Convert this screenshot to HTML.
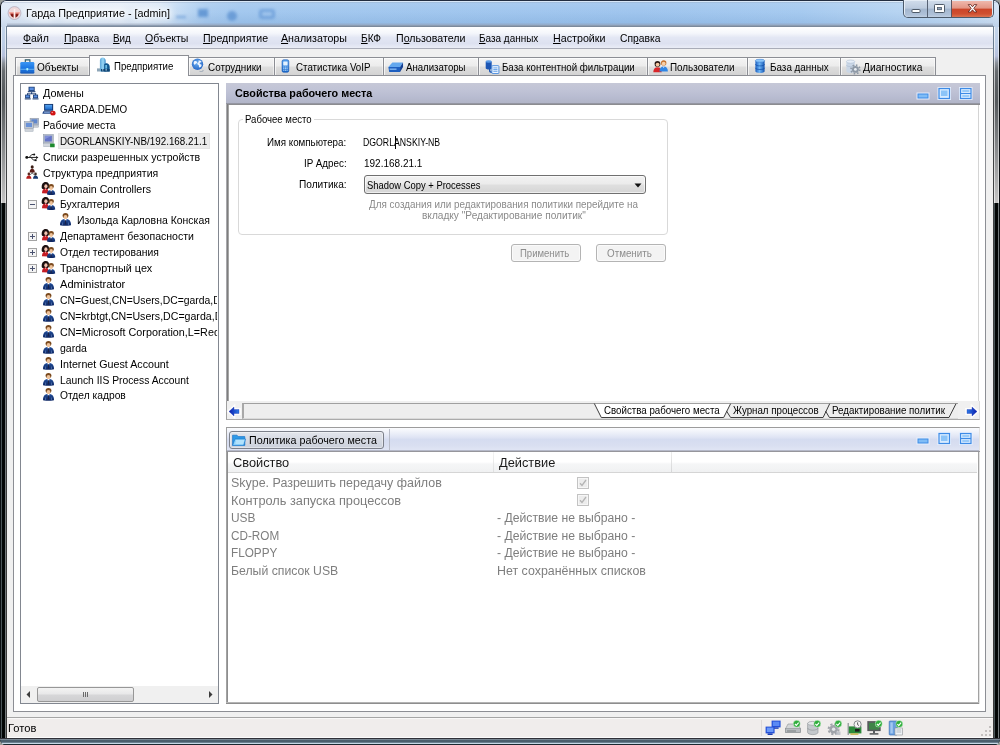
<!DOCTYPE html>
<html lang="ru">
<head>
<meta charset="utf-8">
<title>Гарда Предприятие - [admin]</title>
<style>
*{box-sizing:border-box;margin:0;padding:0}
html,body{width:1000px;height:745px;overflow:hidden;background:#9a9e9a}
body{font-family:"Liberation Sans","DejaVu Sans",sans-serif;font-size:12px;color:#000}
#win{position:absolute;left:0;top:0;width:1000px;height:745px;overflow:hidden;border-radius:6px 6px 6px 6px;background:#000}
#win>div,#win>svg,#win>span{position:absolute}
.t{white-space:pre;line-height:16px;height:16px;transform-origin:0 0}
.t u{text-decoration:underline;text-underline-offset:1px}
.ic{overflow:visible}
.titlebar{background:linear-gradient(90deg,#dfe9f6 0,#e6eef8 120px,#d9e7f6 160px,#bed8f3 182px,#a9cbef 205px,#a0c6ee 240px,#9cc3ed 640px,#a3c8ef 800px,#b4d2f1 900px,#c2daf3 960px,#d2e2f4 100%)}
.titleshade{background:linear-gradient(180deg,rgba(255,255,255,.14) 0,rgba(255,255,255,.03) 45%,rgba(40,90,150,.12) 100%)}
.side{background:linear-gradient(180deg,#c4d5ea 0,#bccde6 18px,#b6c0dc 29px,#8a9098 36px,#686c70 44px,#5a5e61 60px,#55595c 75px,#8c8e90 125px,#c4c4c4 175px,#c8c8c8 176px,#030606 176px,#030606 100%)}
.bottomframe{background:linear-gradient(180deg,#303038 0,#303038 1px,#7a8894 1px,#7a8894 2px,#4a5e6c 2px,#4a5e6c 4px,#6a8090 4px,#6a8090 5px,#c5d8e5 5px,#c5d8e5 6px,#1a2830 6px)}
.capbtns{border:1px solid #4c5a6b;border-top:none;border-radius:0 0 5px 5px;background:#e4ecf5}
.cbtn{background:linear-gradient(180deg,#cfdbea 0,#bccbde 45%,#a3b6ce 50%,#afc1d8 85%,#c0cfe2 100%)}
.cclose{background:linear-gradient(180deg,#efb8ac 0,#e39584 45%,#cb4529 50%,#cf4f30 80%,#dc7250 100%);border-radius:0 0 3px 0}
.menubar{background:linear-gradient(180deg,#ffffff 0,#f4f6fb 30%,#e3e7f4 50%,#dde1f0 78%,#e9ecf6 100%)}
.tab{border:1px solid #8c8e94;border-bottom:none;background:linear-gradient(180deg,#f4f4f4 0,#ececec 48%,#dedede 52%,#d3d3d3 100%);box-shadow:inset 1px 1px 0 rgba(255,255,255,.7),inset -1px 0 0 rgba(255,255,255,.5)}
.tab.act{background:#fff;box-shadow:none}
.phead{background:linear-gradient(180deg,#c6c8d7 0,#c0c3d6 35%,#b7bbd0 70%,#b1b4c6 100%)}
.phead2{background:linear-gradient(180deg,#fbfcfe 0,#eef1f9 20%,#dfe4f4 42%,#d5dcf0 52%,#d9dff1 80%,#e0e5f4 100%);border-bottom:1px solid #b4b8c8}
.pbtn{border:1px solid #7c808a;border-radius:3px;background:linear-gradient(180deg,#e2e5ec 0,#d6dae3 50%,#cbd0db 100%);box-shadow:inset 0 0 0 1px rgba(255,255,255,.4)}
.combo{border:1px solid #707070;border-radius:3px;background:linear-gradient(180deg,#f2f2f2 0,#ebebeb 48%,#dfdfdf 52%,#d5d5d5 100%);box-shadow:inset 0 0 0 1px rgba(255,255,255,.6)}
.btn{border:1px solid #b4b4b4;border-radius:3px;background:#f3f3f3;box-shadow:inset 0 0 0 1px #fafafa}
.blob{filter:blur(1.600px);opacity:.75}

</style>
</head>
<body>
<svg width="0" height="0" style="position:absolute"><defs>
<linearGradient id="gBlue" x1="0" y1="0" x2="0" y2="1"><stop offset="0" stop-color="#5aa6f2"/><stop offset="1" stop-color="#1766c8"/></linearGradient>
<linearGradient id="gNavy" x1="0" y1="0" x2="0" y2="1"><stop offset="0" stop-color="#3f74c8"/><stop offset="1" stop-color="#16377c"/></linearGradient>
<linearGradient id="gSuit" x1="0" y1="0" x2="0" y2="1"><stop offset="0" stop-color="#24509c"/><stop offset="1" stop-color="#0c2460"/></linearGradient>
<linearGradient id="gRedD" x1="0" y1="0" x2="0" y2="1"><stop offset="0" stop-color="#e04a3a"/><stop offset="1" stop-color="#8f1410"/></linearGradient>
<linearGradient id="gCyl" x1="0" y1="0" x2="1" y2="0"><stop offset="0" stop-color="#1a5fc0"/><stop offset=".45" stop-color="#6db4f6"/><stop offset="1" stop-color="#1454b0"/></linearGradient>
<linearGradient id="gGray" x1="0" y1="0" x2="0" y2="1"><stop offset="0" stop-color="#e8ecf0"/><stop offset="1" stop-color="#9aa4ae"/></linearGradient>
<radialGradient id="gGlobe" cx=".45" cy=".4" r=".7"><stop offset="0" stop-color="#6aaef0"/><stop offset="1" stop-color="#1c5cc0"/></radialGradient>
<linearGradient id="gApp" x1="0" y1="0" x2="0" y2="1"><stop offset="0" stop-color="#b02a20"/><stop offset=".4" stop-color="#7a1410"/><stop offset="1" stop-color="#8c2018"/></linearGradient>
<symbol id="i-app" viewBox="0 0 16 16"><circle cx="8" cy="7.500" r="6.900" fill="#eed8da" stroke="#aaa4b6" stroke-width=".7"/><path d="M2.300 6.300h11.400v1.900H2.300z" fill="#f1a69e"/><path d="M3.500 8.100h3.700v4.300C5 12 3.800 10.400 3.500 8.100z" fill="url(#gApp)"/><path d="M12.500 8.100H8.800v4.300c2.200-.4 3.400-2 3.700-4.300z" fill="url(#gApp)"/><rect x="7.200" y="3.300" width="1.600" height="9.800" rx=".5" fill="#fcf0f0"/></symbol>
<symbol id="i-caps" viewBox="0 0 91 18"><rect x="9" y="9.500" width="8" height="3" rx=".6" fill="#fff" stroke="#4e5a68" stroke-width="1"/><rect x="31.500" y="4.500" width="10" height="8" rx=".8" fill="#fff" stroke="#4e5a68" stroke-width="1"/><rect x="34.500" y="7.500" width="4" height="2.200" fill="#93a6be" stroke="#4e5a68" stroke-width=".8"/><path d="M65.200 4.600h2.600l1.700 2.200 1.700-2.200h2.600l-3 3.700 3 3.700h-2.600l-1.700-2.200-1.700 2.200h-2.600l3-3.700z" fill="#fff" stroke="#5c2018" stroke-width=".8" stroke-linejoin="round"/></symbol>
<symbol id="i-brief" viewBox="0 0 16 16"><path d="M6.300 3.400V.9h4.600v2.500" fill="none" stroke="#2a5868" stroke-width="1.100"/><rect x="1.300" y="3.100" width="14" height="11.300" rx="1.200" fill="url(#gBrief)"/><rect x="1.300" y="9.800" width="14" height="1" fill="#7cc4fa" opacity=".7"/><rect x="7.400" y="9" width="1.800" height="2.400" rx=".6" fill="#a8f4ff"/><rect x="1.300" y="13.300" width="14" height="1.100" fill="#1a58b0" opacity=".6"/></symbol>
<symbol id="i-build" viewBox="0 0 16 16"><path d="M3.900 14.500V3.600C3.900 1.600 5.200 .5 6.600 .5 8.400 .5 9.700 1.800 9.700 3.800V14.500z" fill="url(#gTower)"/><path d="M8.200 14.500V7.200C9 6.200 10.500 6 11.600 6.600 12.800 7.200 13.700 8.400 13.700 10V14.500z" fill="#10568e"/><rect x="9.300" y="8" width="1.800" height="3.600" fill="#7fd0f4" opacity=".85"/><rect x="5" y="12" width="8.700" height="2.500" fill="#0c4474"/><rect x="1" y="11.400" width="3.200" height="3.100" fill="#8ea6b8"/><path d="M6 12.900h1.400M9.400 12.900h1.600" stroke="#d8f0fc" stroke-width=".9"/></symbol>
<symbol id="i-globe" viewBox="0 0 16 16"><circle cx="7.2" cy="7.4" r="6.6" fill="url(#gGlobe)"/><path d="M3.2 4.2c1.2-.8 2.6-.6 3.4.2.6.8-.2 1.6-1 2.2-.8.4-1 1.6-1.8 1.4-1-.4-1.4-2.6-.6-3.8zM8.2 3.2c1.4-.4 3 .2 3.8 1.4-.6.6-1.6.4-2.2 1-.6.8.2 1.8 1.2 1.8 1 .2 1.2 1.2.6 2.2-.6 1-1.6 1.8-2.4 1.2-.6-.8-.2-1.8-.8-2.6-.6-.6-1.6-.8-1.4-1.8.2-1.2 1.4-1.2 1.6-2 .2-.6-.8-.8-.4-1.2z" fill="#eef5ff"/><path d="M9.600 15.600c1.600.6 3.400.2 4.400-1.400" fill="none" stroke="#9aa6b4" stroke-width="1.300"/></symbol>
<symbol id="i-phone" viewBox="0 0 16 16"><rect x="4" y="1" width="8" height="14" rx="1.8" fill="url(#gBlue)" stroke="#1757b4" stroke-width=".7"/><rect x="5.4" y="2.8" width="5.2" height="4.6" rx=".6" fill="#e4f2ff"/><g fill="#bfe0ff"><rect x="5.4" y="8.6" width="1.3" height="1.1"/><rect x="7.35" y="8.6" width="1.3" height="1.1"/><rect x="9.3" y="8.6" width="1.3" height="1.1"/><rect x="5.4" y="10.4" width="1.3" height="1.1"/><rect x="7.35" y="10.4" width="1.3" height="1.1"/><rect x="9.3" y="10.4" width="1.3" height="1.1"/><rect x="5.4" y="12.2" width="1.3" height="1.1"/><rect x="7.35" y="12.2" width="1.3" height="1.1"/><rect x="9.3" y="12.2" width="1.3" height="1.1"/></g></symbol>
<symbol id="i-analyz" viewBox="0 0 16 16"><path d="M.6 8.6L4.6 4.2h10.8L12.4 8.6z" fill="#63a8ee"/><path d="M.6 8.6h11.8v4.6H1.4z" fill="#1d5fc0"/><path d="M12.4 8.6l3-4.4v4.4l-3 4.6z" fill="#123f94"/><rect x="1.8" y="10" width="7" height="1" fill="#9fd0ff"/></symbol>
<symbol id="i-dbfilt" viewBox="0 0 16 16"><path d="M1.4 2.2v7c0 1 1.4 1.6 3 1.6s3-.6 3-1.6v-7z" fill="#1c56b4"/><ellipse cx="4.4" cy="2.2" rx="3" ry="1.3" fill="#5b9ce8"/><path d="M5.4 6.6v5.6c0 .9 1.2 1.4 2.6 1.4" fill="none" stroke="#1c56b4" stroke-width="1.4"/><rect x="7.6" y="6.6" width="7" height="8.4" rx=".8" fill="#eef6ff" stroke="#3f86dc" stroke-width=".9"/><path d="M9 9h4.2M9 10.8h4.2M9 12.6h4.2" stroke="#4f94e4" stroke-width=".9"/></symbol>
<symbol id="i-users" viewBox="0 0 16 16"><circle cx="4.8" cy="5.6" r="2.9" fill="#2a1a16"/><circle cx="4.9" cy="6.2" r="1.9" fill="#f4c8a2"/><path d="M.6 14c0-3 1.6-5 4.2-5s4.2 2 4.2 5z" fill="#d8262a"/><circle cx="11" cy="4.6" r="2.7" fill="#c4702a"/><circle cx="11" cy="5.2" r="1.9" fill="#f6cfa8"/><path d="M6.8 13.2c0-3 1.6-5 4.2-5s4.2 2 4.2 5z" fill="#2f86e6"/><path d="M10.2 8.4l.8 1.4.8-1.4z" fill="#fff"/></symbol>
<symbol id="i-db" viewBox="0 0 16 16"><path d="M3.4 2.4v11.2c0 1 2 1.8 4.6 1.8s4.6-.8 4.6-1.8V2.4z" fill="url(#gCyl)"/><ellipse cx="8" cy="2.4" rx="4.6" ry="1.7" fill="#8cc6fa" stroke="#2a6cc8" stroke-width=".5"/><path d="M3.4 6.2c0 1 2 1.7 4.6 1.7s4.6-.7 4.6-1.7M3.4 10c0 1 2 1.7 4.6 1.7s4.6-.7 4.6-1.7" fill="none" stroke="#0f4aa4" stroke-width=".7"/></symbol>
<symbol id="i-diag" viewBox="0 0 16 16"><path d="M1.4 2.6v9.6c0 1 1.8 1.7 4.2 1.7s4.2-.7 4.2-1.7V2.6z" fill="#c9d6e6"/><ellipse cx="5.6" cy="2.6" rx="4.2" ry="1.6" fill="#e6eef8" stroke="#a4b6cc" stroke-width=".5"/><path d="M1.4 6c0 1 1.8 1.6 4.2 1.6S9.8 7 9.8 6" fill="none" stroke="#a9bad0" stroke-width=".6"/><circle cx="10.4" cy="10.4" r="3.4" fill="#8e99a6"/><circle cx="10.4" cy="10.4" r="4.4" fill="none" stroke="#8e99a6" stroke-width="1.6" stroke-dasharray="1.6 1.85"/><circle cx="10.4" cy="10.4" r="1.4" fill="#e8edf3"/></symbol>
<symbol id="i-domains" viewBox="0 0 16 16"><g fill="#17386f"><rect x="4.6" y=".6" width="6.8" height="5"/><rect x="3.8" y="5.8" width="8.4" height="1.2"/><rect x="7.4" y="7" width="1.2" height="2"/><rect x="3" y="8.4" width="10" height="1"/><rect x="3" y="8.4" width="1" height="1.8"/><rect x="12" y="8.4" width="1" height="1.8"/><rect x=".8" y="9.8" width="5.6" height="4.2"/><rect x=".2" y="14.2" width="6.8" height="1.2"/><rect x="9.6" y="9.8" width="5.6" height="4.2"/><rect x="9" y="14.2" width="6.8" height="1.2"/></g><rect x="5.6" y="1.5" width="4.8" height="3.2" fill="#5b8fe0"/><rect x="1.7" y="10.7" width="3.8" height="2.4" fill="#5b8fe0"/><rect x="10.5" y="10.7" width="3.8" height="2.4" fill="#5b8fe0"/></symbol>
<symbol id="i-pcred" viewBox="0 0 16 16"><rect x="2.4" y=".8" width="10.4" height="8.8" fill="#17386f"/><rect x="3.6" y="2" width="8" height="6.2" fill="url(#gBlue)"/><path d="M1.4 10.2h12l1 3.2H.4z" fill="#24488a"/><rect x="2.4" y="11.2" width="6.6" height="1" fill="#86a8dc"/><circle cx="12.6" cy="12.6" r="3" fill="#d21414"/><circle cx="11.8" cy="11.7" r="1" fill="#f58a80"/></symbol>
<symbol id="i-workst" viewBox="0 0 16 16"><rect x="6.4" y=".6" width="9" height="7.4" fill="#b4bcc8" stroke="#8894a6" stroke-width=".6"/><rect x="7.8" y="1.8" width="6.2" height="4.6" fill="#5f86cc"/><rect x="8" y="8.4" width="7.4" height="2.2" fill="#c9ced6" stroke="#9aa4b2" stroke-width=".5"/><rect x=".6" y="4.4" width="9.4" height="7.6" fill="#bfc6d0" stroke="#8894a6" stroke-width=".6"/><rect x="2" y="5.8" width="6.4" height="4.6" fill="#6a92d8"/><rect x="1" y="12.4" width="8.6" height="2.8" fill="#cfd4da" stroke="#9aa4b2" stroke-width=".5"/></symbol>
<symbol id="i-pcgreen" viewBox="0 0 16 16"><rect x="2" y=".8" width="11.2" height="9.6" fill="#b4bcc8" stroke="#8894a6" stroke-width=".6"/><rect x="3.6" y="2.2" width="8" height="6.4" fill="#6474c8"/><path d="M3.6 2.2h8L3.6 6z" fill="#8c9ae0" opacity=".7"/><rect x="2.4" y="10.8" width="7.4" height="3.8" fill="#d4d8de" stroke="#9aa4b2" stroke-width=".5"/><rect x="9.6" y="11" width="5.2" height="4.2" rx=".6" fill="#1e8a2e"/></symbol>
<symbol id="i-usb" viewBox="0 0 16 16"><circle cx="2.2" cy="8.6" r="1.7" fill="#111"/><path d="M2 8.6h11M5 8.6l3-3.4h2.4M7 8.6l3 3.2h2" fill="none" stroke="#111" stroke-width="1.1"/><path d="M13 6.8l2.8 1.8L13 10.4z" fill="#111"/><circle cx="10.8" cy="5.2" r="1.2" fill="#111"/><rect x="11.4" y="10.8" width="2.2" height="2.2" fill="#111"/></symbol>
<symbol id="i-org" viewBox="0 0 16 16"><path d="M8 6.4v3M4.2 11.6l3.8-2.4 3.8 2.4" stroke="#444" stroke-width=".9" fill="none"/><circle cx="8" cy="2.6" r="1.9" fill="#3a1d14"/><path d="M4.8 8.4c0-2.4 1.2-3.9 3.2-3.9s3.2 1.5 3.2 3.9z" fill="#5a1c16"/><circle cx="3.8" cy="10.2" r="1.6" fill="#5a241c"/><path d="M.6 15.4c0-2.3 1.2-3.7 3.2-3.7S7 13.100 7 15.400z" fill="#b41c1c"/><circle cx="12.200" cy="10.200" r="1.600" fill="#3a2a22"/><path d="M9 15.400c0-2.300 1.200-3.700 3.200-3.700s3.200 1.400 3.200 3.700z" fill="#15396f"/></symbol>
<symbol id="i-group" viewBox="0 0 16 16"><path d="M.7 6.800C.4 3.200 2 1 4.600 1 7.400 1 8.600 3 8 6.200 7.600 7.800 6.800 8 6 8H2.400C1.400 8 .8 7.600 .7 6.800z" fill="#1c1010"/><ellipse cx="4.900" cy="5.200" rx="1.600" ry="1.900" fill="#f2c4b2"/><path d="M1 12.200C1 9 2.200 7.400 4.400 7.400 6.400 7.400 7.400 8.600 7.400 10.400V12.400z" fill="#c41c24"/><path d="M4 7.500l.7 1.700.7-1.700z" fill="#fbe4dc"/><path d="M6 13.400C6 10.400 7.400 9 10.100 9S14.200 10.400 14.200 13.400Q10.100 14.600 6 13.400z" fill="url(#gSuit)"/><ellipse cx="10.200" cy="5.400" rx="2.600" ry="2.300" fill="#7b4a1e"/><ellipse cx="10.200" cy="6.900" rx="1.700" ry="2" fill="#eec29a"/><path d="M9.200 9.100l1 2.400 1-2.400z" fill="#fff"/><path d="M9.900 9.800h.6l.4 2.900-.7.700-.7-.7z" fill="#1a2248"/></symbol>
<symbol id="i-user" viewBox="0 0 16 16"><path d="M2 13.200C2 8.600 4 7 7.500 7S13 8.600 13 13.200Q7.500 14.400 2 13.200z" fill="url(#gSuit)"/><ellipse cx="7.500" cy="3.500" rx="2.900" ry="2.600" fill="#7b4a1e"/><ellipse cx="7.500" cy="5.100" rx="1.900" ry="2.200" fill="#eec29a"/><path d="M6.300 7.100L7.500 10.200 8.700 7.100z" fill="#fff"/><path d="M7.200 8h.6l.5 3.800-.8.900-.8-.9z" fill="#1a2248"/><path d="M4.600 10.500v3M10.400 10.500v3" stroke="#7ea2dc" stroke-width=".5"/></symbol>
<symbol id="i-plus" viewBox="0 0 9 9"><rect x=".5" y=".5" width="8" height="8" fill="#f4f4f4" stroke="#a4a4a4"/><path d="M2 4.500h5M4.500 2v5" stroke="#4a5270" stroke-width="1"/></symbol>
<symbol id="i-minus" viewBox="0 0 9 9"><rect x=".5" y=".5" width="8" height="8" fill="#f4f4f4" stroke="#a4a4a4"/><path d="M2 4.500h5" stroke="#4a5270" stroke-width="1"/></symbol>
<linearGradient id="gArrow" x1="0" y1="0" x2="1" y2="0"><stop offset="0" stop-color="#0a1cae"/><stop offset="1" stop-color="#2f7be6"/></linearGradient>
<symbol id="i-chk" viewBox="0 0 8 8"><circle cx="4" cy="4" r="3.800" fill="#2fae3c" stroke="#d8f0d8" stroke-width=".6"/><path d="M2 4.200l1.500 1.500L6 2.700" fill="none" stroke="#fff" stroke-width="1.200"/></symbol>
<symbol id="s-net" viewBox="0 0 16 16"><rect x="6.600" y=".6" width="9" height="6.800" fill="#2450d8"/><rect x="7.800" y="1.600" width="6.600" height="4.400" fill="#5a8af4"/><rect x="8.600" y="7.400" width="5" height="1.400" fill="#1a3cb4"/><rect x=".6" y="6.600" width="9" height="6.800" fill="#2450d8"/><rect x="1.800" y="7.600" width="6.600" height="4.400" fill="#6a98f8"/><rect x="2.600" y="13.400" width="5" height="1.600" fill="#1a3cb4"/></symbol>
<symbol id="s-drive" viewBox="0 0 16 16"><path d="M.6 8.600L3 4h10l2.400 4.600v3.800H.6z" fill="#d4d6d8" stroke="#8c9094" stroke-width=".6"/><rect x=".6" y="8.600" width="14.800" height="3.800" fill="#b8bcc0" stroke="#8c9094" stroke-width=".6"/><rect x="2" y="10.600" width="9" height=".8" fill="#6c7074"/><use href="#i-chk" x="8" y="0" width="7.500" height="7.500"/></symbol>
<symbol id="s-cyl" viewBox="0 0 16 16"><path d="M1.600 3.400v9c0 1.200 2.400 2.200 5.200 2.200s5.200-1 5.200-2.200v-9z" fill="#c4c8cc" stroke="#8c9094" stroke-width=".6"/><ellipse cx="6.800" cy="3.400" rx="5.200" ry="2" fill="#e4e6e8" stroke="#8c9094" stroke-width=".6"/><path d="M1.600 8c0 1.200 2.400 2.200 5.200 2.200S12 9.200 12 8" fill="none" stroke="#8c9094" stroke-width=".6"/><use href="#i-chk" x="7.500" y="0" width="7.500" height="7.500"/></symbol>
<symbol id="s-gear" viewBox="0 0 16 16"><circle cx="6.600" cy="9.200" r="4.200" fill="#a0a4aa"/><circle cx="6.600" cy="9.200" r="5" fill="none" stroke="#a0a4aa" stroke-width="2" stroke-dasharray="2.200 1.727"/><circle cx="6.600" cy="9.200" r="1.700" fill="#e4e6ea"/><rect x="9" y="11.500" width="4.500" height="3.500" fill="#b8bcc4" opacity=".8"/><use href="#i-chk" x="7.500" y="0" width="7.500" height="7.500"/></symbol>
<symbol id="s-card" viewBox="0 0 16 16"><rect x=".6" y="3" width="1.200" height="12" fill="#8c9094"/><rect x="1.800" y="6.400" width="12.600" height="7" fill="#2c8a3a"/><rect x="3.400" y="13.400" width="8" height="1.400" fill="#c8b040"/><rect x="8" y="9" width="4.600" height="2.600" fill="#1c1c1c"/><circle cx="10.600" cy="4.400" r="3.600" fill="#f4f4f4" stroke="#6c7074" stroke-width=".8"/><path d="M10.600 2.400v2.200l1.400 1" fill="none" stroke="#333" stroke-width=".8"/></symbol>
<symbol id="s-mon" viewBox="0 0 16 16"><rect x=".8" y="1.600" width="12.400" height="9.200" fill="#5a5e62" stroke="#3a3c3e" stroke-width=".6"/><rect x="2" y="2.800" width="10" height="6.800" fill="#3f8448"/><rect x="6" y="10.800" width="2" height="2.400" fill="#5a5e62"/><rect x="2.600" y="13.200" width="8.800" height="1.400" fill="#4a4c4e"/><use href="#i-chk" x="8" y="0" width="7.500" height="7.500"/></symbol>
<symbol id="s-srv" viewBox="0 0 16 16"><rect x="1.200" y="1" width="8" height="14" rx=".8" fill="#6aa0e0" stroke="#2f64b0" stroke-width=".6"/><rect x="2.400" y="2.400" width="2.400" height="11" fill="#a4c8f0"/><rect x="7" y="8" width="7.600" height="7" fill="#eef2f6" stroke="#8c9094" stroke-width=".6"/><path d="M8.400 10h4.800M8.400 12h4.800" stroke="#9aa0a8" stroke-width=".7"/><use href="#i-chk" x="7.500" y=".2" width="7.500" height="7.500"/></symbol>
<linearGradient id="gTower" x1="0" y1="0" x2="1" y2="0"><stop offset="0" stop-color="#5aa4d8"/><stop offset=".55" stop-color="#9ad8f6"/><stop offset="1" stop-color="#3f8cc8"/></linearGradient>
<linearGradient id="gBrief" x1="0" y1="0" x2="0" y2="1"><stop offset="0" stop-color="#3a96f4"/><stop offset=".5" stop-color="#1c78e4"/><stop offset="1" stop-color="#1a64c8"/></linearGradient>

</defs></svg>
<div id="win">
<div class="titlebar" style="left:0px;top:0px;width:1000px;height:27px;"></div>
<div class="titleshade" style="left:0px;top:0px;width:1000px;height:27px;"></div>
<div class="blob" style="left:176px;top:15.5px;width:10px;height:2.5px;background:#5f95d4"></div>
<div class="blob" style="left:198px;top:9px;width:10px;height:8px;background:#4f88cc"></div>
<div class="blob" style="left:227px;top:10.5px;width:10px;height:10px;background:#5a90d0;border-radius:5px"></div>
<div class="blob" style="left:259px;top:9px;width:16px;height:9.5px;border:3px solid #6498d6;border-radius:3px"></div>
<div style="left:2px;top:2px;width:996px;height:1px;background:rgba(150,165,190,.35)"></div>
<div style="left:7px;top:23px;width:986px;height:1px;background:rgba(150,160,180,.25)"></div>
<div style="left:7px;top:24px;width:986px;height:1px;background:rgba(150,160,180,.5)"></div>
<div style="left:7px;top:25px;width:986px;height:1px;background:#8d9db2"></div>
<div style="left:1px;top:1px;width:998px;height:1px;background:rgba(255,255,255,.55)"></div>
<div class="side" style="left:0px;top:27px;width:7px;height:711px;"></div>
<div style="left:1px;top:27px;width:1px;height:176px;background:rgba(255,255,255,.62)"></div>
<div style="left:5px;top:27px;width:1px;height:176px;background:rgba(255,255,255,.55)"></div>
<div style="left:1px;top:203px;width:1px;height:535px;background:#4a5558"></div>
<div style="left:5px;top:203px;width:1px;height:535px;background:#747a7c"></div>
<div class="side" style="left:993px;top:27px;width:7px;height:711px;"></div>
<div style="left:994px;top:27px;width:1px;height:176px;background:rgba(255,255,255,.62)"></div>
<div style="left:998px;top:27px;width:1px;height:176px;background:rgba(255,255,255,.55)"></div>
<div style="left:994px;top:203px;width:1px;height:535px;background:#4a5558"></div>
<div style="left:998px;top:203px;width:1px;height:535px;background:#747a7c"></div>
<div style="left:0px;top:0px;width:1000px;height:745px;border:1px solid #0b0f12;border-top-color:#222d40;border-bottom-color:#1a2830;border-radius:6px"></div>
<div style="left:6px;top:26px;width:1px;height:712px;background:linear-gradient(180deg,#6f8296 0,#66788c 30px,#4c5054 42px,#404244 80px,#3a3a3a 100%)"></div>
<div style="left:993px;top:26px;width:1px;height:712px;background:linear-gradient(180deg,#6f8296 0,#66788c 30px,#4c5054 42px,#404244 80px,#3a3a3a 100%)"></div>
<div style="left:6px;top:26px;width:988px;height:1px;background:#7c8a9c"></div>
<div class="bottomframe" style="left:0px;top:738px;width:1000px;height:7px;"></div>
<svg class="ic" style="left:6.500px;top:5.900px" width="15" height="15" viewBox="0 0 16 16"><use href="#i-app"/></svg>
<span class="t" style="left:26.4px;top:5.48px;font-size:11.6px;transform:scaleX(0.9316);text-shadow:0 0 5px #fff,0 0 7px #fff,0 0 9px #fff,0 0 12px #fff">Гарда Предприятие - [admin]</span>
<div class="capbtns" style="left:903px;top:0px;width:91px;height:18px;"></div>
<div class="cbtn" style="left:905px;top:1px;width:22px;height:15.5px;border-radius:0 0 0 3px"></div>
<div class="cbtn" style="left:928px;top:1px;width:23px;height:15.5px;"></div>
<div class="cclose" style="left:952px;top:1px;width:40px;height:15.5px;"></div>
<div style="left:927px;top:0px;width:1px;height:17px;background:#566274"></div>
<div style="left:951px;top:0px;width:1px;height:17px;background:#5e5560"></div>
<svg class="ic" style="left:903px;top:0" width="91" height="18" viewBox="0 0 91 18"><use href="#i-caps"/></svg>
<div style="left:7px;top:27px;width:986px;height:711px;background:#f0f0f0"></div>
<div class="menubar" style="left:7px;top:27px;width:986px;height:21px;"></div>
<div style="left:7px;top:48px;width:986px;height:1px;background:#a9acb8"></div>
<span class="t" style="left:23.4px;top:29.68px;font-size:11.6px;transform:scaleX(0.9078);"><u>Ф</u>айл</span>
<span class="t" style="left:63.7px;top:29.68px;font-size:11.6px;transform:scaleX(0.9008);"><u>П</u>равка</span>
<span class="t" style="left:113.2px;top:29.68px;font-size:11.6px;transform:scaleX(0.8483);"><u>В</u>ид</span>
<span class="t" style="left:144.9px;top:29.68px;font-size:11.6px;transform:scaleX(0.9074);"><u>О</u>бъекты</span>
<span class="t" style="left:202.7px;top:29.68px;font-size:11.6px;transform:scaleX(0.9109);"><u>П</u>редприятие</span>
<span class="t" style="left:281.4px;top:29.68px;font-size:11.6px;transform:scaleX(0.9185);"><u>А</u>нализаторы</span>
<span class="t" style="left:361.4px;top:29.68px;font-size:11.6px;transform:scaleX(0.8735);"><u>Б</u>КФ</span>
<span class="t" style="left:395.9px;top:29.68px;font-size:11.6px;transform:scaleX(0.9167);">П<u>о</u>льзователи</span>
<span class="t" style="left:479px;top:29.68px;font-size:11.6px;transform:scaleX(0.8586);"><u>Б</u>аза данных</span>
<span class="t" style="left:552.8px;top:29.68px;font-size:11.6px;transform:scaleX(0.9233);"><u>Н</u>астройки</span>
<span class="t" style="left:620.4px;top:29.68px;font-size:11.6px;transform:scaleX(0.8879);">Сп<u>р</u>авка</span>
<div style="left:13px;top:75px;width:973px;height:637px;background:#fff;border:1px solid #8c8e94"></div>
<div class="tab" style="left:15px;top:57px;width:75px;height:18px;"></div>
<svg class="ic" style="left:19px;top:59px" width="16" height="16" viewBox="0 0 16 16"><use href="#i-brief"/></svg>
<span class="t" style="left:37.4px;top:59.22px;font-size:11.5px;transform:scaleX(0.8727);">Объекты</span>
<div class="tab" style="left:188px;top:57px;width:87px;height:18px;"></div>
<svg class="ic" style="left:190px;top:59px" width="16" height="16" viewBox="0 0 16 16"><use href="#i-globe" transform="matrix(.864 0 0 .864 1.280 -1.090)"/></svg>
<span class="t" style="left:208.2px;top:59.22px;font-size:11.5px;transform:scaleX(0.8588);">Сотрудники</span>
<div class="tab" style="left:274px;top:57px;width:110px;height:18px;"></div>
<svg class="ic" style="left:278px;top:59px" width="16" height="16" viewBox="0 0 16 16"><use href="#i-phone" transform="matrix(.84 0 0 .89 .7 -.1)"/></svg>
<span class="t" style="left:296.4px;top:59.22px;font-size:11.5px;transform:scaleX(0.8476);">Статистика VoIP</span>
<div class="tab" style="left:383px;top:57px;width:96px;height:18px;"></div>
<svg class="ic" style="left:388px;top:59px" width="16" height="16" viewBox="0 0 16 16"><use href="#i-analyz" transform="matrix(.99 0 0 1.070 -.2 -1.100)"/></svg>
<span class="t" style="left:406.4px;top:59.22px;font-size:11.5px;transform:scaleX(0.8360);">Анализаторы</span>
<div class="tab" style="left:478px;top:57px;width:170px;height:18px;"></div>
<svg class="ic" style="left:485px;top:59px" width="16" height="16" viewBox="0 0 16 16"><use href="#i-dbfilt" transform="matrix(1 0 0 .94 -.7 .45)"/></svg>
<span class="t" style="left:501.9px;top:59.22px;font-size:11.5px;transform:scaleX(0.8443);">База контентной фильтрации</span>
<div class="tab" style="left:647px;top:57px;width:101px;height:18px;"></div>
<svg class="ic" style="left:653px;top:59px" width="16" height="16" viewBox="0 0 16 16"><use href="#i-users" transform="matrix(1 0 0 .98 -.3 -.56)"/></svg>
<span class="t" style="left:670.4px;top:59.22px;font-size:11.5px;transform:scaleX(0.8580);">Пользователи</span>
<div class="tab" style="left:747px;top:57px;width:94px;height:18px;"></div>
<svg class="ic" style="left:752px;top:59px" width="16" height="16" viewBox="0 0 16 16"><use href="#i-db" transform="matrix(1 0 0 .95 0 -.6)"/></svg>
<span class="t" style="left:769.9px;top:59.22px;font-size:11.5px;transform:scaleX(0.8582);">База данных</span>
<div class="tab" style="left:840px;top:57px;width:96px;height:18px;"></div>
<svg class="ic" style="left:845px;top:59px" width="16" height="16" viewBox="0 0 16 16"><use href="#i-diag"/></svg>
<span class="t" style="left:862.9px;top:59.22px;font-size:11.5px;transform:scaleX(0.8909);">Диагностика</span>
<div class="tab act" style="left:89px;top:55px;width:100px;height:21px;"></div>
<svg class="ic" style="left:96px;top:57px" width="16" height="16" viewBox="0 0 16 16"><use href="#i-build"/></svg>
<span class="t" style="left:114.4px;top:57.62px;font-size:11.5px;transform:scaleX(0.8365);">Предприятие</span>
<div style="left:20px;top:83px;width:199px;height:621px;background:#fff;border:1px solid #828790"></div>
<div style="left:58px;top:133px;width:152px;height:16px;background:#ebebeb;border:1px solid #e4e4e4"></div>
<svg class="ic" style="left:24px;top:85px" width="16" height="16" viewBox="0 0 16 16"><use href="#i-domains" transform="matrix(.9 0 0 .86 .42 1.18)"/></svg>
<span class="t" style="left:43.15px;top:84.98px;font-size:11.6px;transform:scaleX(0.9382);">Домены</span>
<svg class="ic" style="left:41px;top:100.92px" width="16" height="16" viewBox="0 0 16 16"><use href="#i-pcred" transform="matrix(.87 0 0 .78 1 2.300)"/></svg>
<span class="t" style="left:60.15px;top:100.90px;font-size:11.6px;transform:scaleX(0.8475);">GARDA.DEMO</span>
<svg class="ic" style="left:24px;top:116.84px" width="16" height="16" viewBox="0 0 16 16"><use href="#i-workst" transform="matrix(.95 0 0 .9 0 .66)"/></svg>
<span class="t" style="left:43.15px;top:116.82px;font-size:11.6px;transform:scaleX(0.9006);">Рабочие места</span>
<svg class="ic" style="left:41px;top:132.76px" width="16" height="16" viewBox="0 0 16 16"><use href="#i-pcgreen" transform="matrix(.88 0 0 .88 .64 .9)"/></svg>
<span class="t" style="left:60.15px;top:132.74px;font-size:11.6px;transform:scaleX(0.8477);">DGORLANSKIY-NB/192.168.21.1</span>
<svg class="ic" style="left:24px;top:148.68px" width="16" height="16" viewBox="0 0 16 16"><use href="#i-usb" transform="matrix(.86 0 0 .84 .9 1.200)"/></svg>
<span class="t" style="left:43.15px;top:148.66px;font-size:11.6px;transform:scaleX(0.9137);">Списки разрешенных устройств</span>
<svg class="ic" style="left:24px;top:164.6px" width="16" height="16" viewBox="0 0 16 16"><use href="#i-org" transform="matrix(.8 0 0 .92 1.800 -.3)"/></svg>
<span class="t" style="left:43.15px;top:164.58px;font-size:11.6px;transform:scaleX(0.9035);">Структура предприятия</span>
<svg class="ic" style="left:41px;top:180.52px" width="16" height="16" viewBox="0 0 16 16"><use href="#i-group"/></svg>
<span class="t" style="left:60.15px;top:180.50px;font-size:11.6px;transform:scaleX(0.9185);">Domain Controllers</span>
<svg class="ic" style="left:41px;top:196.44px" width="16" height="16" viewBox="0 0 16 16"><use href="#i-group"/></svg>
<svg class="ic" style="left:28px;top:200.44px" width="9" height="9" viewBox="0 0 9 9"><use href="#i-minus"/></svg>
<span class="t" style="left:60.15px;top:196.42px;font-size:11.6px;transform:scaleX(0.8907);">Бухгалтерия</span>
<svg class="ic" style="left:58px;top:212.36px" width="16" height="16" viewBox="0 0 16 16"><use href="#i-user"/></svg>
<span class="t" style="left:76.9px;top:212.34px;font-size:11.6px;transform:scaleX(0.9026);">Изольда Карловна Конская</span>
<svg class="ic" style="left:41px;top:228.28px" width="16" height="16" viewBox="0 0 16 16"><use href="#i-group"/></svg>
<svg class="ic" style="left:28px;top:232.28px" width="9" height="9" viewBox="0 0 9 9"><use href="#i-plus"/></svg>
<span class="t" style="left:59.9px;top:228.26px;font-size:11.6px;transform:scaleX(0.9078);">Департамент безопасности</span>
<svg class="ic" style="left:41px;top:244.2px" width="16" height="16" viewBox="0 0 16 16"><use href="#i-group"/></svg>
<svg class="ic" style="left:28px;top:248.2px" width="9" height="9" viewBox="0 0 9 9"><use href="#i-plus"/></svg>
<span class="t" style="left:59.9px;top:244.18px;font-size:11.6px;transform:scaleX(0.8941);">Отдел тестирования</span>
<svg class="ic" style="left:41px;top:260.12px" width="16" height="16" viewBox="0 0 16 16"><use href="#i-group"/></svg>
<svg class="ic" style="left:28px;top:264.12px" width="9" height="9" viewBox="0 0 9 9"><use href="#i-plus"/></svg>
<span class="t" style="left:59.9px;top:260.10px;font-size:11.6px;transform:scaleX(0.9331);">Транспортный цех</span>
<svg class="ic" style="left:41px;top:276.04px" width="16" height="16" viewBox="0 0 16 16"><use href="#i-user"/></svg>
<span class="t" style="left:59.9px;top:276.02px;font-size:11.6px;transform:scaleX(0.9561);">Administrator</span>
<svg class="ic" style="left:41px;top:291.96px" width="16" height="16" viewBox="0 0 16 16"><use href="#i-user"/></svg>
<span class="t" style="left:59.9px;top:291.94px;font-size:11.6px;transform:scaleX(0.8955);clip-path:inset(0 4.0px 0 0)">CN=Guest,CN=Users,DC=garda,D</span>
<svg class="ic" style="left:41px;top:307.88px" width="16" height="16" viewBox="0 0 16 16"><use href="#i-user"/></svg>
<span class="t" style="left:59.9px;top:307.86px;font-size:11.6px;transform:scaleX(0.9143);clip-path:inset(0 5.7px 0 0)">CN=krbtgt,CN=Users,DC=garda,D</span>
<svg class="ic" style="left:41px;top:323.8px" width="16" height="16" viewBox="0 0 16 16"><use href="#i-user"/></svg>
<span class="t" style="left:59.9px;top:323.78px;font-size:11.6px;transform:scaleX(0.9293);clip-path:inset(0 3.0px 0 0)">CN=Microsoft Corporation,L=Red</span>
<svg class="ic" style="left:41px;top:339.72px" width="16" height="16" viewBox="0 0 16 16"><use href="#i-user"/></svg>
<span class="t" style="left:59.9px;top:339.70px;font-size:11.6px;transform:scaleX(0.9071);">garda</span>
<svg class="ic" style="left:41px;top:355.64px" width="16" height="16" viewBox="0 0 16 16"><use href="#i-user"/></svg>
<span class="t" style="left:59.9px;top:355.62px;font-size:11.6px;transform:scaleX(0.9224);">Internet Guest Account</span>
<svg class="ic" style="left:41px;top:371.56px" width="16" height="16" viewBox="0 0 16 16"><use href="#i-user"/></svg>
<span class="t" style="left:59.9px;top:371.54px;font-size:11.6px;transform:scaleX(0.8889);">Launch IIS Process Account</span>
<svg class="ic" style="left:41px;top:387.48px" width="16" height="16" viewBox="0 0 16 16"><use href="#i-user"/></svg>
<span class="t" style="left:59.9px;top:387.46px;font-size:11.6px;transform:scaleX(0.8849);">Отдел кадров</span>
<div style="left:21px;top:686px;width:197px;height:17px;background:#f0f0f0"></div>
<div style="left:37px;top:687px;width:97px;height:15px;border:1px solid #979797;border-radius:2px;background:linear-gradient(180deg,#f3f3f3 0,#e8e8e9 45%,#d6d6d8 55%,#cfcfd1 100%)"></div>
<svg class="ic" style="left:21px;top:686px" width="197" height="17" viewBox="0 0 197 17"><path d="M9 5v7L5.500 8.500z" fill="#3c3c3c"/><path d="M188 5v7l3.500-3.500z" fill="#3c3c3c"/><path d="M62.500 6v5M64.500 6v5M66.500 6v5" stroke="#6a6a6a" stroke-width="1"/></svg>
<div class="phead" style="left:226px;top:83px;width:754px;height:21px;"></div>
<span class="t" style="left:235px;top:85.02px;font-size:11.5px;transform:scaleX(0.9389);font-weight:bold">Свойства рабочего места</span>
<svg class="ic" style="left:915px;top:85px" width="60" height="16" viewBox="0 0 60 16"><g fill="none" stroke="#e9f2ff" stroke-width="3" opacity=".9"><rect x="3" y="9" width="10" height="4"/><rect x="24" y="3.500" width="10.500" height="10"/><rect x="45.500" y="3.500" width="10.500" height="10"/></g><rect x="3" y="9" width="10" height="4" fill="#7fbcf6" stroke="#3e8be6" stroke-width="1"/><rect x="24" y="3.500" width="10.500" height="10" fill="#d6eaff" stroke="#3e8be6" stroke-width="1.200"/><rect x="26" y="5.500" width="6.500" height="5.500" fill="#8cc4f8"/><rect x="45.500" y="3.500" width="10.500" height="10" fill="#d6eaff" stroke="#3e8be6" stroke-width="1.200"/><path d="M45.500 8.500h10.500" stroke="#3e8be6" stroke-width="1.200"/><rect x="47.300" y="5.200" width="7" height="1.600" fill="#8cc4f8"/><rect x="47.300" y="10.200" width="7" height="1.600" fill="#8cc4f8"/></svg>
<div style="left:226px;top:103px;width:753px;height:298px;background:#fff;border-right:1px solid #d4d4d4"></div>
<div style="left:226px;top:103px;width:754px;height:1px;background:#9496a2"></div>
<div style="left:226px;top:104px;width:754px;height:1px;background:#8c8c90"></div>
<div style="left:226px;top:104px;width:1px;height:297px;background:#a8a8ac"></div>
<div style="left:227px;top:104px;width:1px;height:297px;background:#7e7e7e"></div>
<div style="left:228px;top:105px;width:1px;height:296px;background:#a6a6a6"></div>
<div style="left:238px;top:119px;width:430px;height:116px;border:1px solid #d9d9d9;border-radius:4px"></div>
<div style="left:243px;top:112px;width:71px;height:14px;background:#fff"></div>
<span class="t" style="left:244.9px;top:111.02px;font-size:11.5px;transform:scaleX(0.8333);">Рабочее место</span>
<span class="t" style="left:267.4px;top:134.27px;font-size:11.5px;transform:scaleX(0.8495);">Имя компьютера:</span>
<span class="t" style="left:363.15px;top:134.27px;font-size:11.5px;transform:scaleX(0.7576);">DGORLANSKIY-NB</span>
<div style="left:395px;top:136px;width:1px;height:13px;background:#000"></div>
<span class="t" style="left:303.9px;top:155.02px;font-size:11.5px;transform:scaleX(0.8533);">IP Адрес:</span>
<span class="t" style="left:364.4px;top:155.02px;font-size:11.5px;transform:scaleX(0.8696);">192.168.21.1</span>
<span class="t" style="left:298.9px;top:176.02px;font-size:11.5px;transform:scaleX(0.8806);">Политика:</span>
<div class="combo" style="left:364px;top:175px;width:282px;height:19px;"></div>
<span class="t" style="left:366.7px;top:176.72px;font-size:11.5px;transform:scaleX(0.8193);">Shadow Copy + Processes</span>
<svg class="ic" style="left:634px;top:183px" width="8" height="5" viewBox="0 0 8 5"><path d="M.500 .500h7L4 4.500z" fill="#111"/></svg>
<span class="t" style="left:369.4px;top:195.52px;font-size:11.5px;transform:scaleX(0.8583);color:#8a8a8a">Для создания или редактирования политики перейдите на</span>
<span class="t" style="left:422.4px;top:207.32px;font-size:11.5px;transform:scaleX(0.8793);color:#8a8a8a">вкладку &quot;Редактирование политик&quot;</span>
<div class="btn" style="left:511px;top:244px;width:70px;height:18px;"></div>
<span class="t" style="left:520.4px;top:245.02px;font-size:11.5px;transform:scaleX(0.8297);color:#8c8c8c">Применить</span>
<div class="btn" style="left:596px;top:244px;width:70px;height:18px;"></div>
<span class="t" style="left:607.4px;top:245.02px;font-size:11.5px;transform:scaleX(0.8542);color:#8c8c8c">Отменить</span>
<div style="left:226px;top:401px;width:754px;height:19px;background:#f0f0f0;border-left:1px solid #a0a0a0;border-bottom:1px solid #ababab;border-right:1px solid #dcdcdc"></div>
<div style="left:242px;top:403px;width:716px;height:16px;background:#eeeeee;border-left:2px solid #a8a8a8;border-top:1px solid #a0a0a0;border-bottom:1px solid #dadada"></div>
<svg class="ic" style="left:590px;top:401px" width="375" height="19" viewBox="0 0 375 19"><path d="M4.300 3L11.300 16.500H133.700L140.600 3z" fill="#fff"/><path d="M4.300 2.500L11.300 16.500H133.700L140.600 2.700" fill="none" stroke="#3c3c3c" stroke-width="1"/><path d="M136.400 9.900L140.600 16.500H233.100L239.700 2.700" fill="none" stroke="#3c3c3c" stroke-width="1"/><path d="M235.500 10L239.400 16.500H359L366 2.700" fill="none" stroke="#3c3c3c" stroke-width="1"/></svg>
<span class="t" style="left:604px;top:402.22px;font-size:11.5px;transform:scaleX(0.8462);">Свойства рабочего места</span>
<span class="t" style="left:733.2px;top:402.22px;font-size:11.5px;transform:scaleX(0.8471);">Журнал процессов</span>
<span class="t" style="left:832.4px;top:402.22px;font-size:11.5px;transform:scaleX(0.8487);">Редактирование политик</span>
<svg class="ic" style="left:228px;top:405.500px" width="12" height="11" viewBox="0 0 12 11"><g stroke="#fff" stroke-width="2.500" opacity=".9"><path d="M.5 5.500L6 .5V3.300H11.500V7.700H6V10.500z" fill="#fff"/></g><path d="M1 5.500L6 1V3.500H11V7.500H6V10z" fill="url(#gArrow)" stroke="#0a1fa8" stroke-width=".3" stroke-linejoin="round"/></svg>
<svg class="ic" style="left:966px;top:405.500px" width="12" height="11" viewBox="0 0 12 11"><g transform="translate(12,0) scale(-1,1)"><g stroke="#fff" stroke-width="2.500" opacity=".9"><path d="M.5 5.500L6 .5V3.300H11.500V7.700H6V10.500z" fill="#fff"/></g><path d="M1 5.500L6 1V3.500H11V7.500H6V10z" fill="url(#gArrow)" stroke="#0a1fa8" stroke-width=".3" stroke-linejoin="round"/></g></svg>
<div style="left:226px;top:427px;width:754px;height:277px;background:#fff;border-left:1px solid #a0a0a0;border-top:1px solid #9c9c9c;border-right:1px solid #e3e3e3;border-bottom:1px solid #e3e3e3"></div>
<div class="phead2" style="left:227px;top:428px;width:752px;height:23px;"></div>
<div style="left:389px;top:429px;width:1px;height:21px;background:#b8bcc8"></div>
<div class="pbtn" style="left:229px;top:430.5px;width:155px;height:18px;"></div>
<svg class="ic" style="left:232px;top:434px" width="14" height="12" viewBox="0 0 14 12"><path d="M.6 1.200h4.400l1.200 1.400h6.600v8.800H.6z" fill="#2f9ae8" stroke="#1a74c8" stroke-width=".7"/><path d="M.6 11.400L3 5h10.600l-2 6.400z" fill="#8fd4fb" stroke="#1a74c8" stroke-width=".6"/><path d="M4 7h8M3.500 9h8" stroke="#e8f7ff" stroke-width=".8"/></svg>
<span class="t" style="left:249.4px;top:431.98px;font-size:11.6px;transform:scaleX(0.9250);">Политика рабочего места</span>
<svg class="ic" style="left:915px;top:430px" width="60" height="16" viewBox="0 0 60 16"><g fill="none" stroke="#e9f2ff" stroke-width="3" opacity=".9"><rect x="3" y="9" width="10" height="4"/><rect x="24" y="3.500" width="10.500" height="10"/><rect x="45.500" y="3.500" width="10.500" height="10"/></g><rect x="3" y="9" width="10" height="4" fill="#7fbcf6" stroke="#3e8be6" stroke-width="1"/><rect x="24" y="3.500" width="10.500" height="10" fill="#d6eaff" stroke="#3e8be6" stroke-width="1.200"/><rect x="26" y="5.500" width="6.500" height="5.500" fill="#8cc4f8"/><rect x="45.500" y="3.500" width="10.500" height="10" fill="#d6eaff" stroke="#3e8be6" stroke-width="1.200"/><path d="M45.500 8.500h10.500" stroke="#3e8be6" stroke-width="1.200"/><rect x="47.300" y="5.200" width="7" height="1.600" fill="#8cc4f8"/><rect x="47.300" y="10.200" width="7" height="1.600" fill="#8cc4f8"/></svg>
<div style="left:226px;top:451px;width:753px;height:253px;background:#fff;border-right:1px solid #a2a2a2"></div>
<div style="left:226px;top:451px;width:754px;height:1px;background:#96969c"></div>
<div style="left:226px;top:452px;width:1px;height:252px;background:#a2a2a2"></div>
<div style="left:227px;top:452px;width:1px;height:252px;background:#8e8e8e"></div>
<div style="left:226px;top:702px;width:753px;height:1px;background:#b4b4b4"></div>
<div style="left:226px;top:703px;width:753px;height:1px;background:#8e8e8e"></div>
<div style="left:228px;top:452px;width:749px;height:21px;background:linear-gradient(180deg,#ffffff 0,#ffffff 50%,#f5f6f7 60%,#f0f1f2 100%);border-bottom:1px solid #d5d5d5"></div>
<div style="left:493px;top:452px;width:1px;height:20px;background:linear-gradient(180deg,#f4f4f4,#dedfe0)"></div>
<div style="left:671px;top:452px;width:1px;height:20px;background:linear-gradient(180deg,#ececec,#d6d7d8)"></div>
<span class="t" style="left:233.1px;top:455.34px;font-size:12px;transform:scaleX(1.0664);color:#1a1a1a">Свойство</span>
<span class="t" style="left:499px;top:455.34px;font-size:12px;transform:scaleX(1.0670);color:#1a1a1a">Действие</span>
<span class="t" style="left:230.8px;top:474.94px;font-size:12px;transform:scaleX(1.0378);color:#7e7e7e">Skype. Разрешить передачу файлов</span>
<span class="t" style="left:230.8px;top:492.64px;font-size:12px;transform:scaleX(1.0633);color:#7e7e7e">Контроль запуска процессов</span>
<span class="t" style="left:230.8px;top:510.34px;font-size:12px;transform:scaleX(0.9924);color:#7e7e7e">USB</span>
<span class="t" style="left:230.8px;top:527.84px;font-size:12px;transform:scaleX(0.9771);color:#7e7e7e">CD-ROM</span>
<span class="t" style="left:230.8px;top:545.44px;font-size:12px;transform:scaleX(0.9797);color:#7e7e7e">FLOPPY</span>
<span class="t" style="left:230.8px;top:563.04px;font-size:12px;transform:scaleX(1.0210);color:#7e7e7e">Белый список USB</span>
<span class="t" style="left:497px;top:510.34px;font-size:12px;transform:scaleX(1.0176);color:#7e7e7e">- Действие не выбрано -</span>
<span class="t" style="left:497px;top:527.84px;font-size:12px;transform:scaleX(1.0176);color:#7e7e7e">- Действие не выбрано -</span>
<span class="t" style="left:497px;top:545.44px;font-size:12px;transform:scaleX(1.0176);color:#7e7e7e">- Действие не выбрано -</span>
<span class="t" style="left:497px;top:563.04px;font-size:12px;transform:scaleX(1.0344);color:#7e7e7e">Нет сохранённых списков</span>
<svg class="ic" style="left:576.500px;top:476.5px" width="12" height="12" viewBox="0 0 12 12"><rect x=".5" y=".5" width="11" height="11" fill="#f6f6f6" stroke="#c3c3c3"/><rect x="2" y="2" width="8" height="8" fill="#ececec"/><path d="M3 6.200l2 2.300L9 3" fill="none" stroke="#b4b4b4" stroke-width="1.300"/></svg>
<svg class="ic" style="left:576.500px;top:494.3px" width="12" height="12" viewBox="0 0 12 12"><rect x=".5" y=".5" width="11" height="11" fill="#f6f6f6" stroke="#c3c3c3"/><rect x="2" y="2" width="8" height="8" fill="#ececec"/><path d="M3 6.200l2 2.300L9 3" fill="none" stroke="#b4b4b4" stroke-width="1.300"/></svg>
<div style="left:7px;top:717px;width:986px;height:1px;background:#a5a5a5"></div>
<div style="left:7px;top:718px;width:986px;height:20px;background:#f0edec"></div>
<div style="left:7px;top:718px;width:986px;height:1px;background:#f9f8f8"></div>
<div style="left:7px;top:737px;width:986px;height:1px;background:#fbfbfb"></div>
<span class="t" style="left:8.4px;top:720.28px;font-size:11.6px;transform:scaleX(0.9632);">Готов</span>
<div style="left:761px;top:720px;width:1px;height:16px;background:#dcd8d7"></div>
<svg class="ic" style="left:764.5px;top:720px" width="16" height="16" viewBox="0 0 16 16"><use href="#s-net"/></svg>
<svg class="ic" style="left:785px;top:720px" width="16" height="16" viewBox="0 0 16 16"><use href="#s-drive"/></svg>
<svg class="ic" style="left:806px;top:720px" width="16" height="16" viewBox="0 0 16 16"><use href="#s-cyl"/></svg>
<svg class="ic" style="left:826.5px;top:720px" width="16" height="16" viewBox="0 0 16 16"><use href="#s-gear"/></svg>
<svg class="ic" style="left:847px;top:720px" width="16" height="16" viewBox="0 0 16 16"><use href="#s-card"/></svg>
<svg class="ic" style="left:867px;top:720px" width="16" height="16" viewBox="0 0 16 16"><use href="#s-mon"/></svg>
<svg class="ic" style="left:887.5px;top:720px" width="16" height="16" viewBox="0 0 16 16"><use href="#s-srv"/></svg>
<svg class="ic" style="left:981px;top:726px" width="11" height="11" viewBox="0 0 11 11"><g fill="#c4c0bf"><rect x="8" y="8" width="2" height="2"/><rect x="8" y="4" width="2" height="2"/><rect x="8" y="0" width="2" height="2"/><rect x="4" y="8" width="2" height="2"/><rect x="4" y="4" width="2" height="2"/><rect x="0" y="8" width="2" height="2"/></g></svg>
</div>
</body>
</html>
